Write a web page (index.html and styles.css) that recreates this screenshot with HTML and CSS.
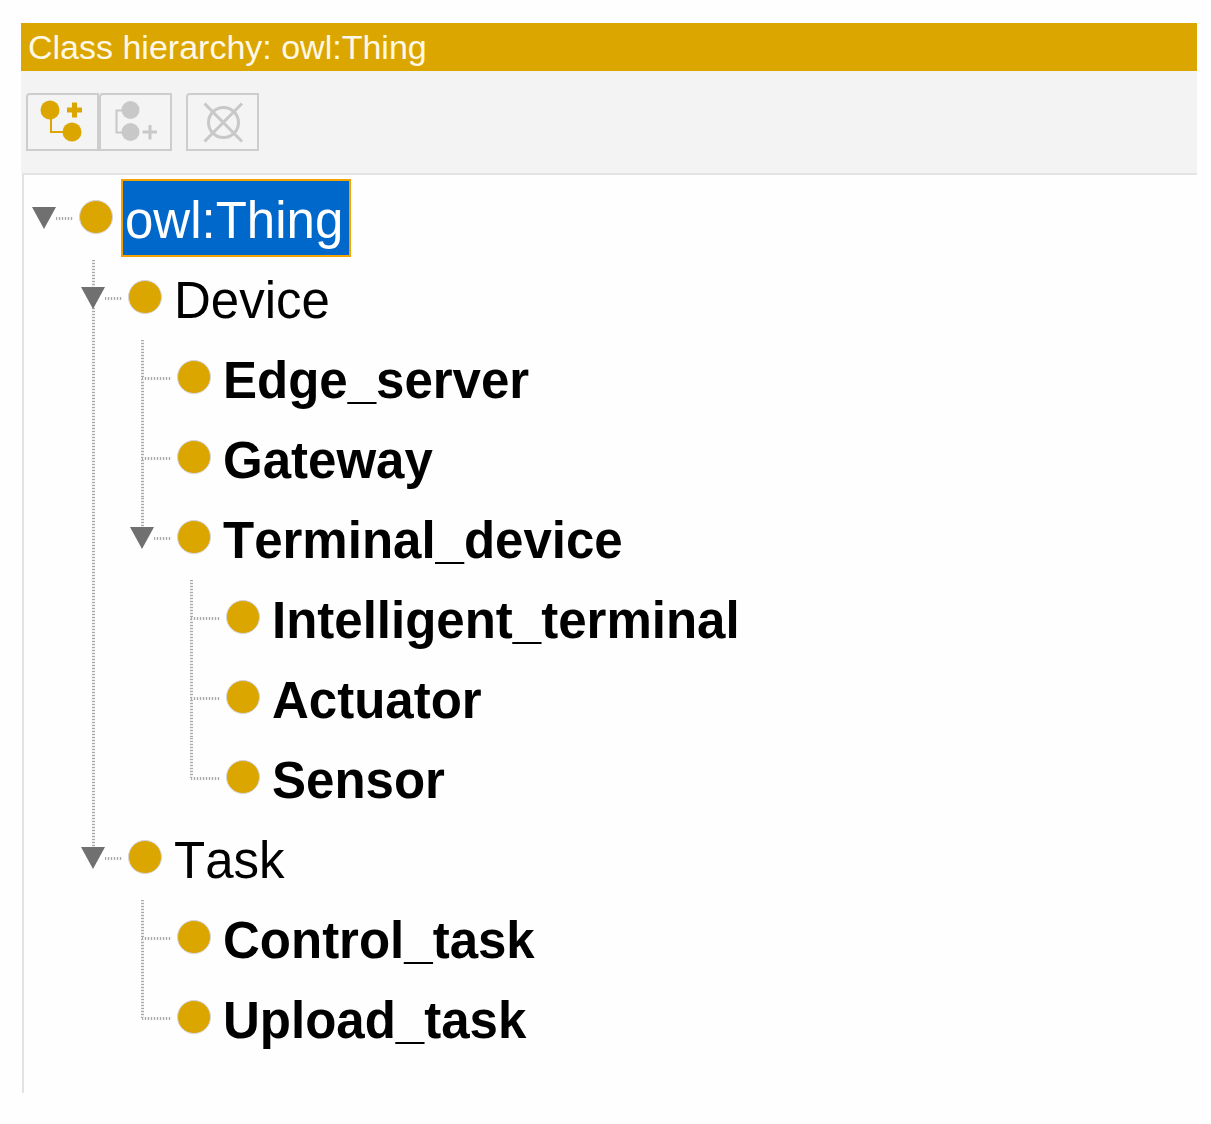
FILE: index.html
```html
<!DOCTYPE html>
<html lang="en">
<head>
<meta charset="utf-8">
<meta name="viewport" content="width=device-width, initial-scale=1">
<title>Class hierarchy</title>
<link rel="stylesheet" href="styles.css">
</head>
<body>
<main class="panel">
  <h1 class="panel-title">Class hierarchy: owl:Thing</h1>
  <div class="toolbar">
    <div class="tool-group">
      <button class="tool" type="button" aria-label="Add subclass">
        <svg class="tool-icon active" viewBox="0 0 69 54" aria-hidden="true">
          <path class="thin" d="M23 20V37H38"/>
          <circle class="solid" cx="22" cy="15" r="9.5"/>
          <circle class="solid" cx="44" cy="37" r="9.5"/>
          <path class="thick" d="M39 15H54M46.500 7.500V22.500"/>
        </svg>
      </button>
      <button class="tool" type="button" aria-label="Add sibling class" disabled>
        <svg class="tool-icon" viewBox="0 0 69 54" aria-hidden="true">
          <path class="thin" d="M24 15.500H15.500V37.500H24"/>
          <circle class="solid" cx="29.500" cy="15" r="9"/>
          <circle class="solid" cx="29.500" cy="37" r="9"/>
          <path class="medium" d="M41.500 37H56M49 30V44.500"/>
        </svg>
      </button>
    </div>
    <button class="tool" type="button" aria-label="Delete class" disabled>
      <svg class="tool-icon" viewBox="0 0 69 54" aria-hidden="true">
        <circle class="medium" cx="35.500" cy="27.500" r="15"/>
        <path class="medium" d="M16.500 8.500L54 46.500M54 8.500L16.500 46.500"/>
      </svg>
    </button>
  </div>

  <div class="tree">
    <ul class="branch root">
      <li class="node">
        <div class="row">
          <button class="twisty" type="button" aria-label="Collapse owl:Thing"></button>
          <span class="link"></span><span class="dot"></span>
          <span class="label selected">owl:Thing</span>
        </div>
        <ul class="branch">
          <li class="node">
            <div class="row">
              <button class="twisty" type="button" aria-label="Collapse Device"></button>
              <span class="link"></span><span class="dot"></span>
              <span class="label">Device</span>
            </div>
            <ul class="branch">
              <li class="node"><div class="row leaf"><span class="link"></span><span class="dot"></span><span class="label defined">Edge_server</span></div></li>
              <li class="node"><div class="row leaf"><span class="link"></span><span class="dot"></span><span class="label defined">Gateway</span></div></li>
              <li class="node">
                <div class="row">
                  <button class="twisty" type="button" aria-label="Collapse Terminal_device"></button>
                  <span class="link"></span><span class="dot"></span>
                  <span class="label defined">Terminal_device</span>
                </div>
                <ul class="branch">
                  <li class="node"><div class="row leaf"><span class="link"></span><span class="dot"></span><span class="label defined">Intelligent_terminal</span></div></li>
                  <li class="node"><div class="row leaf"><span class="link"></span><span class="dot"></span><span class="label defined">Actuator</span></div></li>
                  <li class="node"><div class="row leaf"><span class="link"></span><span class="dot"></span><span class="label defined">Sensor</span></div></li>
                </ul>
              </li>
            </ul>
          </li>
          <li class="node">
            <div class="row">
              <button class="twisty" type="button" aria-label="Collapse Task"></button>
              <span class="link"></span><span class="dot"></span>
              <span class="label">Task</span>
            </div>
            <ul class="branch">
              <li class="node"><div class="row leaf"><span class="link"></span><span class="dot"></span><span class="label defined">Control_task</span></div></li>
              <li class="node"><div class="row leaf"><span class="link"></span><span class="dot"></span><span class="label defined">Upload_task</span></div></li>
            </ul>
          </li>
        </ul>
      </li>
    </ul>
  </div>
</main>
</body>
</html>
```
FILE: styles.css
```css
* {
  box-sizing: border-box;
}

body {
  margin: 0;
  background: #fefefe;
  color: #000;
  font-family: "Liberation Sans", Arial, sans-serif;
  font-kerning: none;
}

.panel {
  margin: 23px 14px 31px 21px;
}

.panel-title {
  margin: 0;
  padding: 0 7px;
  background: #dca600;
  color: #fff8e6;
  font-size: 34px;
  font-weight: 400;
  line-height: 48px;
}

/* Toolbar */
.toolbar {
  display: flex;
  gap: 14px;
  padding: 22px 5px;
  background: #f3f3f3;
}

.tool-group {
  display: flex;
}

.tool {
  width: 73px;
  height: 58px;
  padding: 0;
  border: 2px solid #cdcdcd;
  border-top-left-radius: 4px;
  background: #f4f4f4;
}

.tool-icon {
  display: block;
  width: 100%;
  height: 100%;
  color: #c8c8c8;
  fill: none;
  stroke: currentColor;
}

.tool-icon.active {
  color: #dca600;
}

.solid {
  fill: currentColor;
  stroke: none;
}

.thin {
  stroke-width: 2;
}

.medium {
  stroke-width: 3;
}

.thick {
  stroke-width: 5;
}

/* Tree */
.tree {
  margin-left: 1px;
  padding: 3px 0 35px 8px;
  border-top: 2px solid #e3e3e3;
  border-left: 2px solid #e3e3e3;
}

.branch {
  margin: 0 0 0 49px;
  padding: 0;
  list-style: none;
}

.branch.root {
  margin-left: 0;
}

/* The dotted guide runs the full height of a node, or to the row's middle for the last one. */
.branch .branch > .node {
  background: repeating-linear-gradient(#aaa 0 1px, #eee 1px 3px) 11px 0 / 3px 100% no-repeat;
}

.branch .branch > .node:first-child {
  background-position: 11px 2px;
}

.branch .branch > .node:last-child {
  background-size: 3px 40px;
}

.row {
  display: flex;
  align-items: center;
  height: 80px;
}

.twisty {
  width: 24px;
  height: 22px;
  padding: 0;
  border: 0;
  background: #707070;
  clip-path: polygon(0 0, 100% 0, 50% 100%);
}

.link {
  width: 17px;
  height: 3px;
  background: repeating-linear-gradient(90deg, #aaa 0 1px, #eee 1px 3px);
}

.leaf .link {
  width: 29px;
  margin-left: 12px;
}

.dot {
  width: 34px;
  height: 34px;
  margin: 0 8px 2px 6px;
  border: 1px solid #d3d3dc;
  border-radius: 50%;
  background: #dca600;
}

.label {
  height: 78px;
  padding: 4px 6px 0 2px;
  border: 2px solid transparent;
  font-size: 51px;
  line-height: 72px;
  white-space: nowrap;
}

.selected {
  border-color: #f5a300;
  background: #0068cb;
  color: #fff;
}

.defined {
  font-weight: 700;
}
```
